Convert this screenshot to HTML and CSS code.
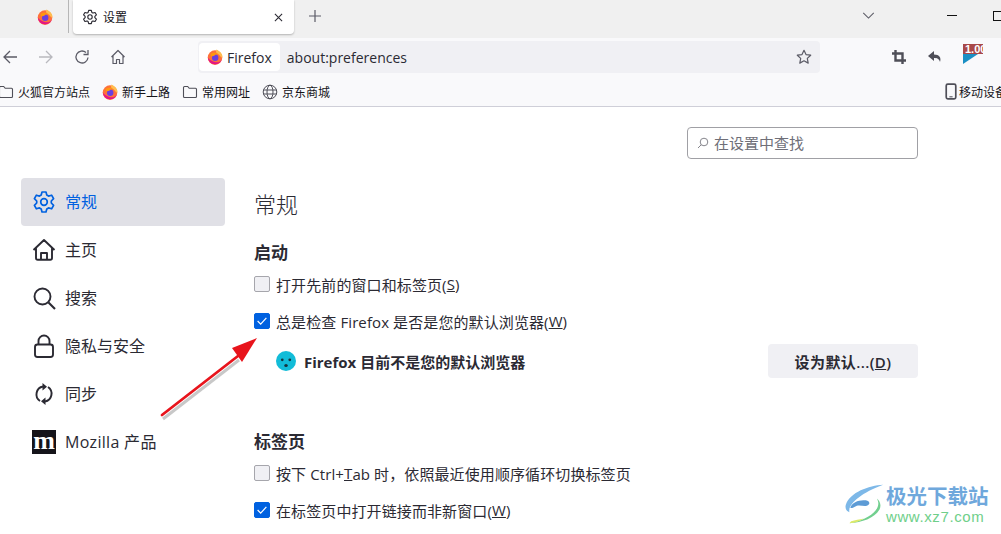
FILE: index.html
```html
<!DOCTYPE html>
<html lang="zh-CN">
<head>
    <meta charset="UTF-8">
    <title>设置</title>
    <link rel="stylesheet" href="styles.css">
</head>
<body>
    <svg class="defs" width="0" height="0">
        <symbol id="firefox" viewBox="0 0 16 16">
            <circle cx="8" cy="8.600" r="7.300" fill="#ff7139"/>
            <path d="M.8 8.500a7.300 7.300 0 0 0 14.400 1.200C14 13 10 14 7.500 13S2 11 .8 8.500z" fill="#e31587"/>
            <path d="M9.500.5c3 1.400 5 3.200 5.800 6 .6 2.500-1 2.500-1.800 1-.8-1.600-2.600-2.400-3.700-3.200C8.800 3.500 8.900 1.800 9.500.5z" fill="#ffbd4f"/>
            <circle cx="8.200" cy="8.800" r="3.200" fill="#6a3fe0"/>
            <path d="M3.500 5c2.500-2 6-1.800 7.800.5-1.800-.6-3.400 0-4 1.300L4 7.500z" fill="#ff980e"/>
        </symbol>
        <symbol id="gear" viewBox="0 0 24 24">
            <path d="M10 2h4l.8 3.100 1.700 1 3.100-.9 2 3.500-2.300 2.300v2l2.300 2.300-2 3.500-3.100-.9-1.700 1L14 22h-4l-.8-3.100-1.700-1-3.100.9-2-3.500 2.300-2.300v-2L2.400 8.700l2-3.500 3.100.9 1.700-1z" fill="none" stroke="currentColor" stroke-width="1.700" stroke-linejoin="round"/>
            <circle cx="12" cy="12" r="3.300" fill="none" stroke="currentColor" stroke-width="1.700"/>
        </symbol>
        <symbol id="folder" viewBox="0 0 16 16">
            <path d="M1.500 3.500c0-.6.400-1 1-1h3.200l1.500 1.800h6.300c.6 0 1 .4 1 1v7.200c0 .6-.4 1-1 1h-11c-.6 0-1-.4-1-1z" fill="none" stroke="#4f4f58" stroke-width="1.100"/>
        </symbol>
    </svg>

    <header class="chrome">
        <div class="tabbar">
            <div class="tab-pinned">
                <svg class="ff-icon"><use href="#firefox"/></svg>
            </div>
            <div class="tab-active">
                <svg class="tab-gear"><use href="#gear"/></svg>
                <span class="tab-title">设置</span>
                <svg class="tab-close" viewBox="0 0 10 10"><path d="M1 1l8 8M9 1l-8 8" stroke="#2b2a33" stroke-width="1.200"/></svg>
            </div>
            <svg class="tab-new" viewBox="0 0 12 12"><path d="M6 0v12M0 6h12" stroke="#5b5b66" stroke-width="1.200"/></svg>
            <div class="tabbar-right">
                <svg class="tabs-list" viewBox="0 0 14 8"><path d="M1 1l6 6 6-6" fill="none" stroke="#5b5b66" stroke-width="1.200"/></svg>
                <span class="win-min"></span>
                <span class="win-max"></span>
            </div>
        </div>

        <div class="navbar">
            <div class="nav-buttons">
                <svg class="nav-icon" viewBox="0 0 16 16"><path d="M15 8H2M8 2L2 8l6 6" fill="none" stroke="#5b5b66" stroke-width="1.300"/></svg>
                <svg class="nav-icon" viewBox="0 0 16 16"><path d="M1 8h13M8 2l6 6-6 6" fill="none" stroke="#b9b9be" stroke-width="1.300"/></svg>
                <svg class="nav-icon" viewBox="0 0 16 16"><path d="M14 8.500A6 6 0 1 1 12 3.500M14 1v4.500H9.500" fill="none" stroke="#5b5b66" stroke-width="1.300"/></svg>
                <svg class="nav-icon" viewBox="0 0 16 16"><path d="M1.500 8L8 1.500 14.500 8M3 6.800V14.500h3.500v-4h3v4H13V6.800" fill="none" stroke="#5b5b66" stroke-width="1.200" stroke-linejoin="round"/></svg>
            </div>
            <div class="urlbar">
                <div class="identity">
                    <svg class="ff-icon"><use href="#firefox"/></svg>
                    <span>Firefox</span>
                </div>
                <span class="url">about:preferences</span>
                <svg class="star" viewBox="0 0 16 16"><path d="M8 1.300l2 4.300 4.700.6-3.400 3.200.9 4.700L8 11.800l-4.200 2.300.9-4.700L1.300 6.200 6 5.600z" fill="none" stroke="#5b5b66" stroke-width="1.200" stroke-linejoin="round"/></svg>
            </div>
            <div class="addons">
                <svg class="addon-crop" viewBox="0 0 14 14"><path d="M3.500 0v10.500H14M0 3.500h10.500V14" fill="none" stroke="#4f4f58" stroke-width="2.400"/></svg>
                <svg class="addon-back" viewBox="0 0 14 14"><path d="M6 1L0 6l6 5V8c3 0 5 .5 6 4 1.500-4-.5-7.500-6-7.500z" fill="#4f4f58"/></svg>
                <div class="addon-flag">
                    <span class="flag-label">1.00</span>
                    <span class="flag-blue"></span>
                </div>
            </div>
        </div>

        <div class="bookmarks">
            <div class="bm-left">
                <span class="bm"><svg class="bm-icon"><use href="#folder"/></svg>火狐官方站点</span>
                <span class="bm"><svg class="ff-icon"><use href="#firefox"/></svg>新手上路</span>
                <span class="bm"><svg class="bm-icon"><use href="#folder"/></svg>常用网址</span>
                <span class="bm"><svg class="bm-icon" viewBox="0 0 16 16"><g fill="none" stroke="#4f4f58" stroke-width="1"><circle cx="8" cy="8" r="6.800"/><ellipse cx="8" cy="8" rx="3" ry="6.800"/><path d="M1.200 6h13.600M1.200 10h13.600"/></g></svg>京东商城</span>
            </div>
            <span class="bm bm-mobile"><svg class="mobile-icon" viewBox="0 0 11 16"><rect x="1" y="1" width="9" height="14" rx="1.500" fill="none" stroke="#4f4f58" stroke-width="1.600"/><path d="M4 13h3" stroke="#4f4f58"/></svg>移动设备</span>
        </div>
    </header>

    <div class="page">
        <div class="search-row">
            <div class="search-box">
                <svg class="search-icon" viewBox="0 0 12 12"><circle cx="7" cy="5" r="3.800" fill="none" stroke="#85858c" stroke-width="1"/><path d="M4.200 7.800L1 11" stroke="#85858c" stroke-width="1"/></svg>
                <span class="search-text">在设置中查找</span>
            </div>
        </div>

        <div class="columns">
            <nav class="sidebar">
                <a class="side-item selected"><svg class="side-icon"><use href="#gear"/></svg><span>常规</span></a>
                <a class="side-item"><svg class="side-icon" viewBox="0 0 24 24"><path d="M1.500 12L12 2l10.500 10M4 10v10c0 1 .8 1.800 1.800 1.800h12.400c1 0 1.800-.8 1.800-1.800V10M9 21.500V15h6v6.500" fill="none" stroke="currentColor" stroke-width="1.900" stroke-linejoin="round"/></svg><span>主页</span></a>
                <a class="side-item"><svg class="side-icon" viewBox="0 0 24 24"><circle cx="10.500" cy="10.500" r="8" fill="none" stroke="currentColor" stroke-width="1.900"/><path d="M16.500 16.500L23 23" stroke="currentColor" stroke-width="2.100"/></svg><span>搜索</span></a>
                <a class="side-item"><svg class="side-icon" viewBox="0 0 24 24"><rect x="3" y="10.500" width="18" height="12.500" rx="2.500" fill="none" stroke="currentColor" stroke-width="1.900"/><path d="M6.500 10.500V7a5.500 5.500 0 0 1 11 0v3.500" fill="none" stroke="currentColor" stroke-width="1.900"/></svg><span>隐私与安全</span></a>
                <a class="side-item"><svg class="side-icon" viewBox="0 0 24 24"><path d="M11 4.500A8 8 0 0 0 8 19M13 19.500A8 8 0 0 0 16 5" fill="none" stroke="currentColor" stroke-width="1.900"/><path d="M10.500 1v7.500L15 4.700zM13.500 23v-7.500L9 19.300z" fill="currentColor"/></svg><span>同步</span></a>
                <a class="side-item"><span class="moz-logo">m</span><span class="moz-name">Mozilla 产品</span></a>
            </nav>

            <main class="content">
                <h1 class="page-title">常规</h1>

                <h2 class="section-title">启动</h2>
                <label class="check-row"><span class="check"></span>打开先前的窗口和标签页(<u>S</u>)</label>
                <label class="check-row"><span class="check checked"><svg viewBox="0 0 16 16"><path d="M3 8l3.500 3.500L13 4.500" fill="none" stroke="#fff" stroke-width="1.400"/></svg></span>总是检查 Firefox 是否是您的默认浏览器(<u>W</u>)</label>
                <div class="default-row">
                    <div class="default-msg">
                        <svg class="sad-face" viewBox="0 0 16 16"><circle cx="8" cy="8" r="8" fill="#12bcd8"/><circle cx="5" cy="7" r="1.100" fill="#15333d"/><circle cx="11" cy="7" r="1.100" fill="#15333d"/><ellipse cx="8" cy="11.500" rx="1.400" ry="1.200" fill="#15333d"/></svg>
                        <span>Firefox 目前不是您的默认浏览器</span>
                    </div>
                    <button class="default-btn">设为默认...(<u>D</u>)</button>
                </div>

                <h2 class="section-title tabs-title">标签页</h2>
                <label class="check-row"><span class="check"></span>按下 Ctrl+<u>T</u>ab 时，依照最近使用顺序循环切换标签页</label>
                <label class="check-row"><span class="check checked"><svg viewBox="0 0 16 16"><path d="M3 8l3.500 3.500L13 4.500" fill="none" stroke="#fff" stroke-width="1.400"/></svg></span>在标签页中打开链接而非新窗口(<u>W</u>)</label>
            </main>
        </div>
    </div>

    <!-- annotation drawn over the screenshot -->
    <svg class="arrow" viewBox="0 0 110 90">
        <path d="M4 81L80 22" stroke="#777" stroke-width="3" opacity=".4" transform="translate(1 3)"/>
        <path d="M4 80L80 21" stroke="#e8141c" stroke-width="2.800" stroke-linecap="round"/>
        <path d="M99 3L74 13l10 14z" fill="#e8141c"/>
    </svg>

    <div class="watermark">
        <svg class="wm-logo" viewBox="0 0 46 46">
            <path d="M44 2C28 3 8 10 3 24c-1 4 1 7 4 8-2-8 12-21 37-30z" fill="#7db8e8"/>
            <path d="M8 27c2-6 10-9 17-8 5 1 5 5 1 6-4 1-9-2-13 1-2 1-4 2-5 1z" fill="#5d9bd5"/>
            <path d="M37 17c6 9-4 22-30 27 14-1 27-5 33-15 2-4 1-9-3-12z" fill="#72cf8f"/>
            <path d="M7 44c6 0 12-2 16-5-5 1-10 2-14 3z" fill="#dce96a"/>
        </svg>
        <div class="wm-text">
            <span class="wm-name">极光下载站</span>
            <span class="wm-url">www.xz7.com</span>
        </div>
    </div>
</body>
</html>
```

FILE: styles.css
```css
html, body {
    margin: 0;
    padding: 0;
    height: 534px;
    overflow: hidden;
}

body {
    position: relative;
    background-color: #fff;
    color: #2b2a33;
    font-family: "Open Sans", "Noto Sans CJK SC", sans-serif;
    font-size: 15px;
}

.defs {
    position: absolute;
}

.ff-icon {
    width: 16px;
    height: 16px;
    flex: none;
}

/* browser chrome */
.chrome {
    background-color: #f9f9fb;
    border-bottom: 1px solid #cfcfd8;
}

.tabbar {
    display: flex;
    align-items: flex-start;
    height: 38px;
    background-color: #f0f0f0;
}

.tab-pinned {
    display: flex;
    align-items: center;
    justify-content: center;
    width: 46px;
    height: 33px;
    margin-right: 4px;
    padding-left: 22px;
    border-right: 1px solid #b6b6b6;
}

.tab-active {
    display: flex;
    align-items: center;
    width: 221px;
    height: 34px;
    box-sizing: border-box;
    padding: 0 11px 0 9px;
    background-color: #fff;
    border-radius: 0 0 4px 4px;
    box-shadow: 0 1px 2px rgba(0, 0, 0, 0.25);
}

.tab-gear {
    width: 16px;
    height: 16px;
    color: #2b2a33;
    margin-right: 5px;
}

.tab-title {
    flex: 1;
    font-size: 12px;
    color: #15141a;
}

.tab-close {
    width: 9px;
    height: 9px;
}

.tab-new {
    width: 12px;
    height: 12px;
    margin: 10px 0 0 15px;
}

.tabbar-right {
    display: flex;
    align-items: center;
    margin-left: auto;
    height: 31px;
    margin-right: -2px;
}

.tabs-list {
    width: 13px;
    height: 7px;
    margin-right: 72px;
}

.win-min {
    width: 10px;
    height: 1px;
    background-color: #111;
    margin-right: 36px;
}

.win-max {
    width: 10px;
    height: 10px;
    border: 1px solid #111;
    box-sizing: border-box;
}

.navbar {
    display: flex;
    align-items: center;
    height: 38px;
}

.nav-buttons {
    display: flex;
    align-items: center;
    gap: 20px;
    width: 198px;
    padding-left: 2px;
    box-sizing: border-box;
}

.nav-icon {
    width: 16px;
    height: 16px;
}

.urlbar {
    display: flex;
    align-items: center;
    width: 622px;
    height: 32px;
    background-color: #f0f0f4;
    border-radius: 4px;
    flex: none;
}

.identity {
    display: flex;
    align-items: center;
    gap: 4px;
    height: 28px;
    padding: 0 8px;
    margin-left: 1px;
    background-color: #fff;
    border-radius: 4px;
    font-size: 14px;
}

.url {
    flex: 1;
    margin-left: 7px;
    font-size: 14px;
}

.star {
    width: 16px;
    height: 16px;
    margin-right: 8px;
}

.addons {
    display: flex;
    align-items: center;
    margin-left: 72px;
}

.addon-crop {
    width: 14px;
    height: 14px;
}

.addon-back {
    width: 14px;
    height: 14px;
    margin-left: 22px;
}

.addon-flag {
    width: 20px;
    height: 20px;
    margin: -6px 0 0 21px;
    overflow: hidden;
}

.flag-label {
    display: block;
    height: 10px;
    background-color: #a84848;
    color: #fff;
    font: bold 11px/10px "Liberation Sans", sans-serif;
    white-space: nowrap;
    padding-left: 2px;
    overflow: hidden;
}

.flag-blue {
    display: block;
    width: 0;
    height: 0;
    border-top: 10px solid #1a8fc4;
    border-right: 15px solid transparent;
}

.bookmarks {
    display: flex;
    align-items: center;
    justify-content: space-between;
    height: 30px;
    padding-top: 1px;
    box-sizing: border-box;
    font-size: 12px;
    color: #15141a;
}

.bm-left {
    display: flex;
    align-items: center;
    gap: 12px;
    margin-left: -2px;
}

.bm {
    display: flex;
    align-items: center;
    gap: 4px;
    white-space: nowrap;
}

.bm-icon {
    width: 16px;
    height: 16px;
}

.bm-mobile {
    gap: 2px;
    margin-right: -6px;
}

.mobile-icon {
    width: 12px;
    height: 17px;
}

/* preferences page */
.search-row {
    display: flex;
    justify-content: flex-end;
    padding: 20px 83px 0 0;
}

.search-box {
    display: flex;
    align-items: center;
    gap: 5px;
    width: 231px;
    height: 32px;
    box-sizing: border-box;
    padding-left: 9px;
    border: 1px solid #a0a0a5;
    border-radius: 4px;
    color: #6f6f78;
    font-size: 15px;
}

.search-icon {
    width: 12px;
    height: 12px;
}

.search-text {
    margin-top: -2px;
}

.columns {
    display: flex;
    margin-top: 19px;
}

.sidebar {
    display: flex;
    flex-direction: column;
    width: 204px;
    margin-left: 21px;
    flex: none;
}

.side-item {
    display: flex;
    align-items: center;
    gap: 9px;
    height: 48px;
    padding-left: 11px;
    border-radius: 4px;
    font-size: 16px;
    color: #2b2a33;
}

.side-item span {
    margin-top: -2px;
}

.side-item.selected {
    background-color: #e0e0e6;
    color: #0061e0;
}

.side-icon {
    width: 24px;
    height: 24px;
    flex: none;
}

.side-item .moz-logo {
    display: block;
    width: 24px;
    height: 24px;
    margin-top: 0;
    background-color: #15141a;
    color: #fff;
    font: bold 26px/21px "Liberation Serif", serif;
    text-align: center;
}

.side-item .moz-name {
    letter-spacing: 0.3px;
}

.content {
    width: 664px;
    margin-left: 29px;
}

.page-title {
    margin: 10px 0 0;
    font-size: 22px;
    line-height: 32px;
    font-weight: 300;
}

.section-title {
    margin: 21px 0 0;
    font-size: 17px;
    line-height: 24px;
    font-weight: 700;
}

.tabs-title {
    margin-top: 52px;
}

.check-row {
    display: flex;
    align-items: center;
    height: 20px;
    margin-top: 17px;
    font-size: 15px;
    letter-spacing: 0.1px;
    white-space: nowrap;
}

.section-title + .check-row {
    margin-top: 9px;
}

.check {
    display: block;
    width: 16px;
    height: 16px;
    margin-right: 6px;
    box-sizing: border-box;
    background-color: #f0f0f4;
    border: 1px solid #a6a6ac;
    border-radius: 2px;
    flex: none;
}

.check.checked {
    background-color: #0061e0;
    border-color: #0061e0;
}

.check svg {
    display: block;
    width: 14px;
    height: 14px;
}

.default-row {
    display: flex;
    align-items: center;
    justify-content: space-between;
    margin-top: 13px;
    padding-left: 22px;
}

.default-msg {
    display: flex;
    align-items: center;
    gap: 8px;
    font-size: 15px;
    font-weight: 700;
}

.sad-face {
    width: 20px;
    height: 20px;
}

.default-btn {
    width: 150px;
    height: 34px;
    border: none;
    border-radius: 4px;
    background-color: #f0f0f4;
    color: #2b2a33;
    font-family: inherit;
    font-size: 15px;
    font-weight: 600;
    letter-spacing: 0.4px;
}

/* overlays on the screenshot */
.arrow {
    position: absolute;
    left: 158px;
    top: 335px;
    width: 110px;
    height: 90px;
}

.watermark {
    position: absolute;
    left: 842px;
    top: 483px;
    display: flex;
    align-items: center;
    gap: 0;
}

.wm-logo {
    width: 44px;
    height: 42px;
}

.wm-text {
    display: flex;
    flex-direction: column;
}

.wm-name {
    font-size: 20.500px;
    line-height: 24px;
    font-weight: 700;
    color: #6fa8dc;
}

.wm-url {
    font: 15px/17px "Liberation Sans", sans-serif;
    letter-spacing: 0.6px;
    color: #6fcf8a;
}
```
